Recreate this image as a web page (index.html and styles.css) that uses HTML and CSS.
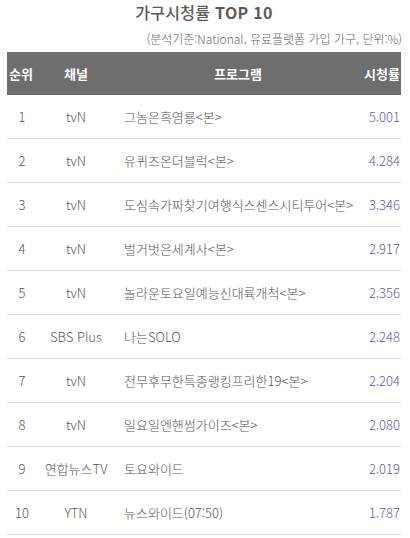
FILE: index.html
```html
<!DOCTYPE html>
<html lang="ko">
<head>
<meta charset="utf-8">
<link rel="stylesheet" href="styles.css">
</head>
<body>
<div class="wrap">
  <h1 class="title">가구시청률 <span class="en">TOP 10</span></h1>
  <p class="note">(분석기준:National, 유료플랫폼 가입 가구, 단위:%)</p>
  <div class="table">
    <div class="row head">
      <div class="rank">순위</div>
      <div class="ch">채널</div>
      <div class="prog">프로그램</div>
      <div class="rate">시청률</div>
    </div>
    <div class="row"><div class="rank">1</div><div class="ch">tvN</div><div class="prog">그놈은흑염룡&lt;본&gt;</div><div class="rate">5.001</div></div>
    <div class="row"><div class="rank">2</div><div class="ch">tvN</div><div class="prog">유퀴즈온더블럭&lt;본&gt;</div><div class="rate">4.284</div></div>
    <div class="row"><div class="rank">3</div><div class="ch">tvN</div><div class="prog">도심속가짜찾기여행식스센스시티투어&lt;본&gt;</div><div class="rate">3.346</div></div>
    <div class="row"><div class="rank">4</div><div class="ch">tvN</div><div class="prog">벌거벗은세계사&lt;본&gt;</div><div class="rate">2.917</div></div>
    <div class="row"><div class="rank">5</div><div class="ch">tvN</div><div class="prog">놀라운토요일예능신대륙개척&lt;본&gt;</div><div class="rate">2.356</div></div>
    <div class="row"><div class="rank">6</div><div class="ch">SBS Plus</div><div class="prog">나는SOLO</div><div class="rate">2.248</div></div>
    <div class="row"><div class="rank">7</div><div class="ch">tvN</div><div class="prog">전무후무한특종랭킹프리한19&lt;본&gt;</div><div class="rate">2.204</div></div>
    <div class="row"><div class="rank">8</div><div class="ch">tvN</div><div class="prog">일요일엔핸썸가이즈&lt;본&gt;</div><div class="rate">2.080</div></div>
    <div class="row"><div class="rank">9</div><div class="ch">연합뉴스TV</div><div class="prog">토요와이드</div><div class="rate">2.019</div></div>
    <div class="row"><div class="rank">10</div><div class="ch">YTN</div><div class="prog">뉴스와이드(07:50)</div><div class="rate">1.787</div></div>
  </div>
</div>
</body>
</html>
```
FILE: styles.css
```css
html, body {
  margin: 0;
  padding: 0;
  background: #ffffff;
}
body {
  font-family: "Noto Sans CJK KR", "Noto Sans", sans-serif;
  color: #555555;
}
.wrap {
  padding: 0 9px 0 7px;
}
.title {
  margin: 0;
  padding-top: 0;
  height: 25px;
  line-height: 24px;
  font-size: 16px;
  font-weight: 500;
  text-align: center;
  color: #5a5a5a;
  letter-spacing: 0.3px;
}
.title .en {
  font-weight: 700;
}
.note {
  margin: 0;
  height: 27px;
  line-height: 28px;
  font-size: 12px;
  font-weight: 300;
  text-align: right;
  color: #666666;
  letter-spacing: 0;
  margin-right: -1px;
}
.table {
  display: flex;
  flex-direction: column;
}
.row {
  display: grid;
  grid-template-columns: 30px 78px 1fr 40px;
  align-items: center;
  height: 43px;
  border-bottom: 1px solid #dedede;
  font-size: 13px;
  font-weight: 300;
  color: #555555;
}
.row.head {
  background: #6e6e6e;
  color: #ffffff;
  font-weight: 700;
  border-bottom: none;
  height: 43px;
}
.rank {
  text-align: center;
}
.head .rank {
  text-align: left;
  padding-left: 2px;
}
.ch {
  text-align: center;
  white-space: nowrap;
}
.prog {
  padding-left: 9px;
  white-space: nowrap;
}
.head .prog {
  text-align: center;
  padding-left: 0;
}
.rate {
  text-align: right;
  padding-right: 1px;
  color: #6b56a6;
}
.head .rate {
  color: #ffffff;
}
```
